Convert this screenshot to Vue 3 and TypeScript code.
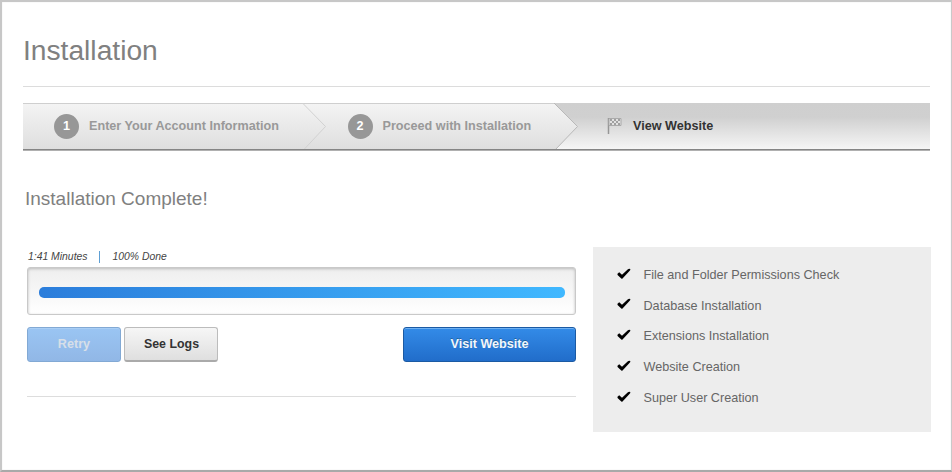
<script setup lang="ts">
interface Step {
  label: string
  icon: 'number' | 'flag'
}

const steps: Step[] = [
  { label: 'Enter Your Account Information', icon: 'number' },
  { label: 'Proceed with Installation', icon: 'number' },
  { label: 'View Website', icon: 'flag' },
]

const checks: string[] = [
  'File and Folder Permissions Check',
  'Database Installation',
  'Extensions Installation',
  'Website Creation',
  'Super User Creation',
]

const elapsed = '1:41 Minutes'
const progress = 100
</script>

<template>
  <main class="window">
    <h1 class="title">Installation</h1>

    <nav class="steps">
      <svg class="steps-bg" viewBox="0 0 907 48" width="907" height="48" aria-hidden="true">
        <defs>
          <linearGradient id="done" x1="0" y1="0" x2="0" y2="1">
            <stop offset="0" stop-color="#f4f4f4" />
            <stop offset="1" stop-color="#dedede" />
          </linearGradient>
          <linearGradient id="active" x1="0" y1="0" x2="0" y2="1">
            <stop offset="0" stop-color="#cfcfcf" />
            <stop offset="0.3" stop-color="#d0d0d0" />
            <stop offset="1" stop-color="#f7f7f7" />
          </linearGradient>
        </defs>
        <rect width="907" height="47" fill="url(#active)" />
        <path d="M0 0H531L554.5 23.5L532 47H0Z" fill="url(#done)" />
        <path d="M0 .5H531" stroke="#cfcfcf" />
        <path d="M279.500 0L302.500 23.500L280.500 47" fill="none" stroke="#d2d2d2" />
        <path d="M531 0L554.500 23.500L532 47" fill="none" stroke="#b9b9b9" />
        <path d="M0 46.500H907" stroke="#858585" />
        <path d="M0 47.500H907" stroke="#b0b0b0" />
      </svg>
      <ol class="step-list">
        <li v-for="(step, i) in steps" :key="step.label" class="step" :class="{ current: step.icon === 'flag' }">
          <span v-if="step.icon === 'number'" class="badge">{{ i + 1 }}</span>
          <svg v-else class="flag" width="15" height="18" viewBox="0 0 15 18" aria-hidden="true">
            <path d="M1.500 1V17" stroke="#969696" stroke-width="1.500" />
            <path d="M2 1.500H14V8.500H2Z" fill="#e2e2e2" stroke="#aaa" />
            <path d="M3 2h2v2h-2zM7 2h2v2h-2zM11 2h2v2h-2zM5 4h2v2h-2zM9 4h2v2h-2zM3 6h2v2h-2zM7 6h2v2h-2zM11 6h2v2h-2z" fill="#a0a0a0" />
          </svg>
          <span>{{ step.label }}</span>
        </li>
      </ol>
    </nav>

    <h2 class="subtitle">Installation Complete!</h2>

    <div class="content">
      <section class="status">
        <p class="meta">
          <span>{{ elapsed }}</span>
          <i class="divider"></i>
          <span>{{ progress }}% Done</span>
        </p>
        <div class="track">
          <div class="bar" :style="{ width: progress + '%' }"></div>
        </div>
        <div class="actions">
          <button class="btn retry" disabled>Retry</button>
          <button class="btn logs">See Logs</button>
          <button class="btn visit">Visit Website</button>
        </div>
      </section>

      <ul class="checks">
        <li v-for="item in checks" :key="item">
          <svg width="14" height="12" viewBox="0 0 14 12" aria-hidden="true">
            <path d="M.5 5.700L2.200 4.200L5 6.700L10.900 1.300Q12 .5 13.300 1.100Q13.500 2 12.700 2.800L5.500 10.500Q4.900 11 4.300 10.500L.8 7.300Q.2 6.500 .5 5.700Z" />
          </svg>
          <span>{{ item }}</span>
        </li>
      </ul>
    </div>
  </main>
</template>

<style>
body {
  margin: 0;
  background: #fff;
}
</style>

<style scoped>
.window {
  box-sizing: border-box;
  width: 952px;
  height: 472px;
  padding: 33px 19px 0 21px;
  overflow: hidden;
  border: 2px solid #c7c7c7;
  border-right: 1px solid #c9c9c9;
  border-bottom-color: #a9a9a9;
  background: #fff;
  box-shadow: inset 0 0 1px 0 #ccc;
  font-family: "Liberation Sans", Arial, sans-serif;
  font-size: 12.64px;
  white-space: nowrap;
}

.title {
  box-sizing: border-box;
  width: 907px;
  height: 52px;
  margin: 0;
  border-bottom: 1px solid #dcdcdc;
  color: #808080;
  font-size: 28.2px;
  font-weight: 400;
  line-height: 31px;
}

.steps {
  display: grid;
  width: 907px;
  margin-top: 16px;
}

.steps-bg,
.step-list {
  grid-area: 1 / 1;
}

.steps-bg {
  display: block;
}

.step-list {
  display: grid;
  grid-template-columns: 293.5px 259.5px 1fr;
  margin: 0;
  padding: 0 0 0 31px;
  list-style: none;
}

.step {
  display: flex;
  align-items: center;
  gap: 10px;
  height: 46px;
  color: #999;
  font-weight: 700;
}

.step.current {
  color: #333;
  gap: 11px;
}

.badge {
  width: 25px;
  height: 25px;
  border-radius: 50%;
  background: #979797;
  color: #fff;
  line-height: 25px;
  text-align: center;
}

.subtitle {
  margin: 36px 0 0 2px;
  color: #808080;
  font-size: 19px;
  font-weight: 400;
  line-height: 24px;
}

.content {
  display: flex;
  align-items: flex-start;
  gap: 17px;
  margin: 36px 0 0 4px;
}

.status {
  box-sizing: border-box;
  width: 549px;
  height: 150px;
  border-bottom: 1px solid #ddd;
}

.meta {
  display: flex;
  align-items: center;
  box-sizing: border-box;
  height: 20px;
  margin: 0;
  padding: 0 0 1px 1px;
  color: #444;
  font-size: 10.4px;
  font-style: italic;
}

.divider {
  width: 1px;
  height: 12px;
  margin: 0 13px 0 11px;
  background: #5e9fd4;
}

.track {
  box-sizing: border-box;
  height: 48px;
  padding: 18.500px 10.500px;
  border: 1px solid #c9c9c9;
  border-radius: 3px;
  background: linear-gradient(#eee, #fff);
  box-shadow: inset 0 1px 3px #bbb;
}

.bar {
  height: 11px;
  border-radius: 5px;
  background: linear-gradient(90deg, #2b7ddb, #40b8ff);
}

.actions {
  display: flex;
  gap: 3px;
  margin-top: 12px;
}

.btn {
  box-sizing: border-box;
  width: 94px;
  height: 35px;
  padding: 0 0 2px;
  border: 1px solid #bcbcbc;
  border-radius: 3px;
  font-family: inherit;
  font-size: 12.64px;
  font-weight: 700;
}

.retry {
  border-color: #82a9d4;
  background: linear-gradient(#9ac5f3, #91b7e6);
  box-shadow: inset 0 1px #a9cef5;
  color: #d7dfe8;
}

.logs {
  padding: 0 0 0 1px;
  border-bottom: 2px solid #aaa;
  background: linear-gradient(#f6f6f6, #dfdfdf);
  color: #333;
  font-size: 12.4px;
}

.visit {
  width: 173px;
  margin-left: auto;
  border-color: #1b5aa3;
  background: linear-gradient(#338be8, #216dca);
  box-shadow: inset 0 1px #6eb0f2;
  color: #f2f7fc;
  text-shadow: 0 -1px #22649f;
}

.checks {
  box-sizing: border-box;
  width: 337.500px;
  height: 185px;
  margin: 0;
  padding: 12.700px 0 0 24px;
  background: #ededed;
  color: #666;
  list-style: none;
}

.checks li {
  display: flex;
  align-items: center;
  gap: 12.500px;
  height: 30.700px;
}

.checks svg {
  margin-top: -2.500px;
}
</style>
